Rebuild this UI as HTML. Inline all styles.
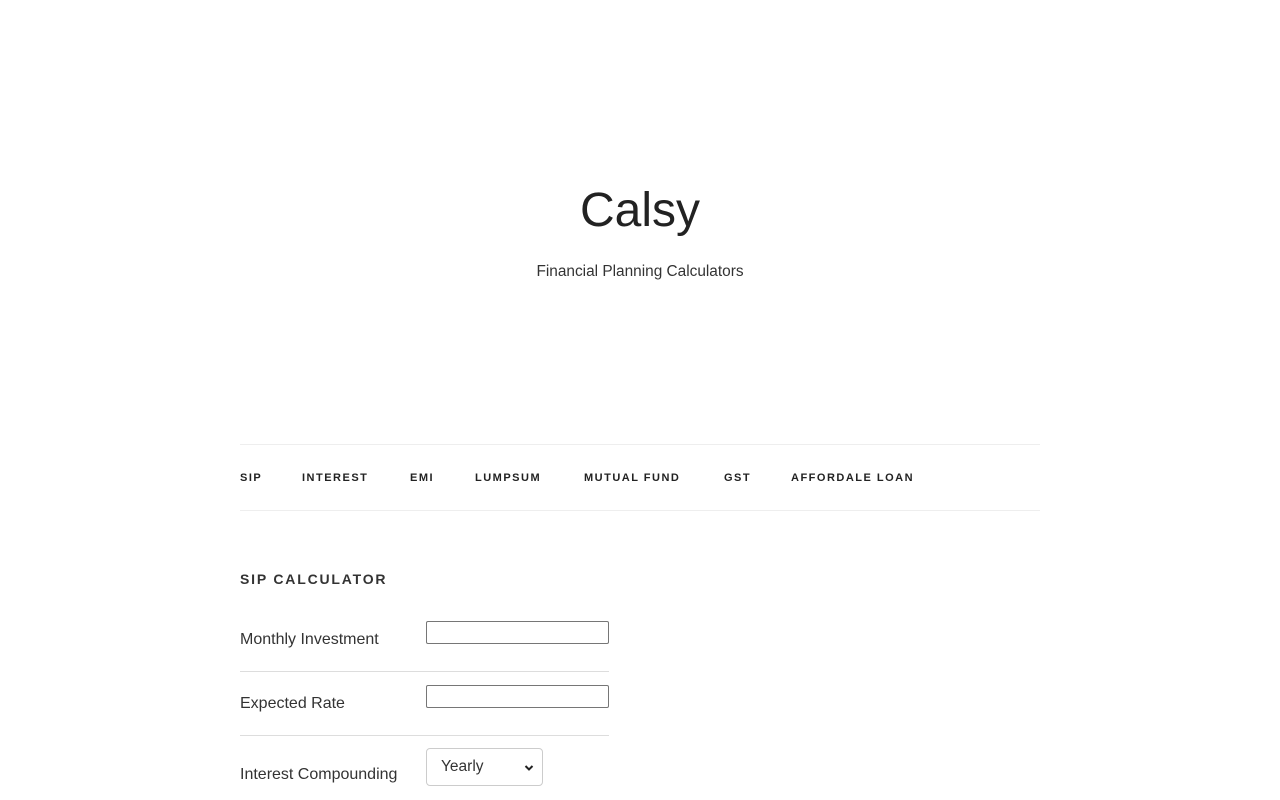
<!DOCTYPE html>
<html><head><meta charset="utf-8"><style>
body{margin:0;background:#fff;font-family:"Liberation Sans",sans-serif;color:#333;width:1280px;height:800px;overflow:hidden;position:relative}
.t{position:absolute;left:0;width:1280px;text-align:center}
.title{top:183px;font-size:48px;color:#222;font-weight:300;letter-spacing:0}
.sub{top:263px;font-size:15.4px;color:#333}
.hr{position:absolute;left:240px;width:800px;height:1px;background:#eee}
.nav{position:absolute;top:472px;font-size:11px;font-weight:bold;letter-spacing:1.5px;color:#222}
h2{position:absolute;left:240px;top:571px;margin:0;font-size:14px;letter-spacing:1.8px;color:#333;font-weight:bold}
.lab{position:absolute;left:240px;font-size:16px;color:#333}
.inp{position:absolute;left:426px;width:181px;height:21px;border:1px solid #767676;border-radius:2px;background:#fff}
.sep{position:absolute;left:240px;width:369px;height:1px;background:#ddd}
.sel{position:absolute;left:426px;top:748px;width:117px;height:38px;border:1px solid #ccc;border-radius:4px;background:#fff;font-size:15.5px;box-sizing:border-box}
</style></head><body>
<div class="t title">Calsy</div>
<div class="t sub">Financial Planning Calculators</div>
<div class="hr" style="top:444px"></div>
<div class="hr" style="top:510px"></div>
<div class="nav" style="left:240px">SIP</div>
<div class="nav" style="left:302px">INTEREST</div>
<div class="nav" style="left:410px">EMI</div>
<div class="nav" style="left:475px">LUMPSUM</div>
<div class="nav" style="left:584px">MUTUAL FUND</div>
<div class="nav" style="left:724px">GST</div>
<div class="nav" style="left:791px">AFFORDALE LOAN</div>
<h2>SIP CALCULATOR</h2>
<div class="lab" style="top:631px">Monthly Investment</div>
<div class="inp" style="top:621px"></div>
<div class="sep" style="top:671px"></div>
<div class="lab" style="top:695px">Expected Rate</div>
<div class="inp" style="top:685px"></div>
<div class="sep" style="top:735px"></div>
<div class="lab" style="top:766px">Interest Compounding</div>
<div class="sel"><span style="position:absolute;left:14px;top:9px;color:#333">Yearly</span>
<svg style="position:absolute;right:8px;top:15px" width="10" height="8" viewBox="0 0 10 8"><path d="M1.5 2 L5 5.5 L8.5 2" stroke="#222" stroke-width="2" fill="none"/></svg></div>
</body></html>
